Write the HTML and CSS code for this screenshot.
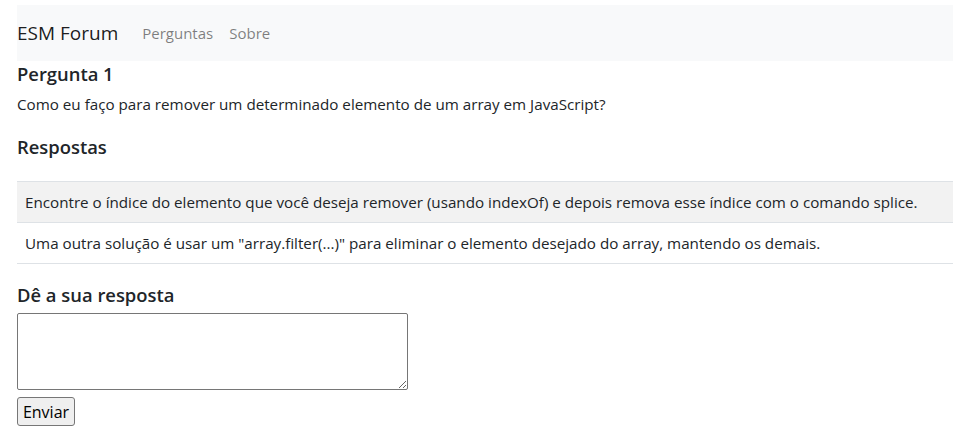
FILE: index.html
```html
<!DOCTYPE html>
<html lang="pt">
<head>
<meta charset="utf-8">
<title>ESM Forum</title>
<link rel="stylesheet" href="styles.css">
</head>
<body>
<div class="page">
  <nav class="navbar">
    <a class="brand" href="#">ESM Forum</a>
    <a class="nav-link" href="#">Perguntas</a>
    <a class="nav-link" href="#">Sobre</a>
  </nav>
  <h5 class="title">Pergunta 1</h5>
  <p class="question">Como eu faço para remover um determinado elemento de um array em JavaScript?</p>
  <h5 class="subtitle">Respostas</h5>
  <ul class="answers">
    <li class="answer striped">Encontre o índice do elemento que você deseja remover (usando indexOf) e depois remova esse índice com o comando splice.</li>
    <li class="answer">Uma outra solução é usar um "array.filter(...)" para eliminar o elemento desejado do array, mantendo os demais.</li>
  </ul>
  <h5 class="form-title">Dê a sua resposta</h5>
  <form class="form">
    <textarea class="textarea" rows="4" cols="50"></textarea>
    <button class="button" type="button">Enviar</button>
  </form>
</div>
</body>
</html>
```
FILE: styles.css
```css
* { box-sizing: border-box; }
html, body { margin: 0; padding: 0; background: #fff; }
body {
  font-family: "Open Sans", "Noto Sans", sans-serif;
  font-size: 15.2px;
  color: #212529;
}
.page {
  padding: 5px 12px 0 17px;
}
.navbar {
  background: #f8f9fa;
  height: 56px;
  display: flex;
  align-items: center;
  gap: 16px;
}
.brand {
  font-size: 19px;
  color: rgba(0,0,0,.9);
  text-decoration: none;
  margin-right: 8px;
}
.nav-link {
  font-size: 15px;
  color: rgba(0,0,0,.5);
  text-decoration: none;
}
h5 {
  margin: 0;
  font-size: 18.4px;
  font-weight: 600;
  line-height: 22px;
}
.title { margin-top: 2px; }
.question { margin: 8px 0 0; line-height: 22px; }
.subtitle { margin-top: 21px; }
.answers {
  list-style: none;
  margin: 23px 0 0;
  padding: 0;
  border-top: 1px solid #dee2e6;
}
.answer {
  height: 41px;
  line-height: 40px;
  padding: 0 8px;
  border-bottom: 1px solid #dee2e6;
}
.striped { background: #f2f2f2; }
.form-title { margin-top: 20px; }
.form { display: flex; flex-direction: column; align-items: flex-start; margin-top: 7px; }
.textarea {
  width: 391px;
  height: 77px;
  border: 1px solid #767676;
  border-radius: 2px;
  resize: both;
  font-family: inherit;
}
.button {
  margin-top: 7px;
  width: 58px;
  height: 29px;
  font-family: inherit;
  font-size: 16px;
  background: #efefef;
  border: 1px solid #767676;
  border-radius: 3px;
  color: #000;
  padding: 0;
}
```
